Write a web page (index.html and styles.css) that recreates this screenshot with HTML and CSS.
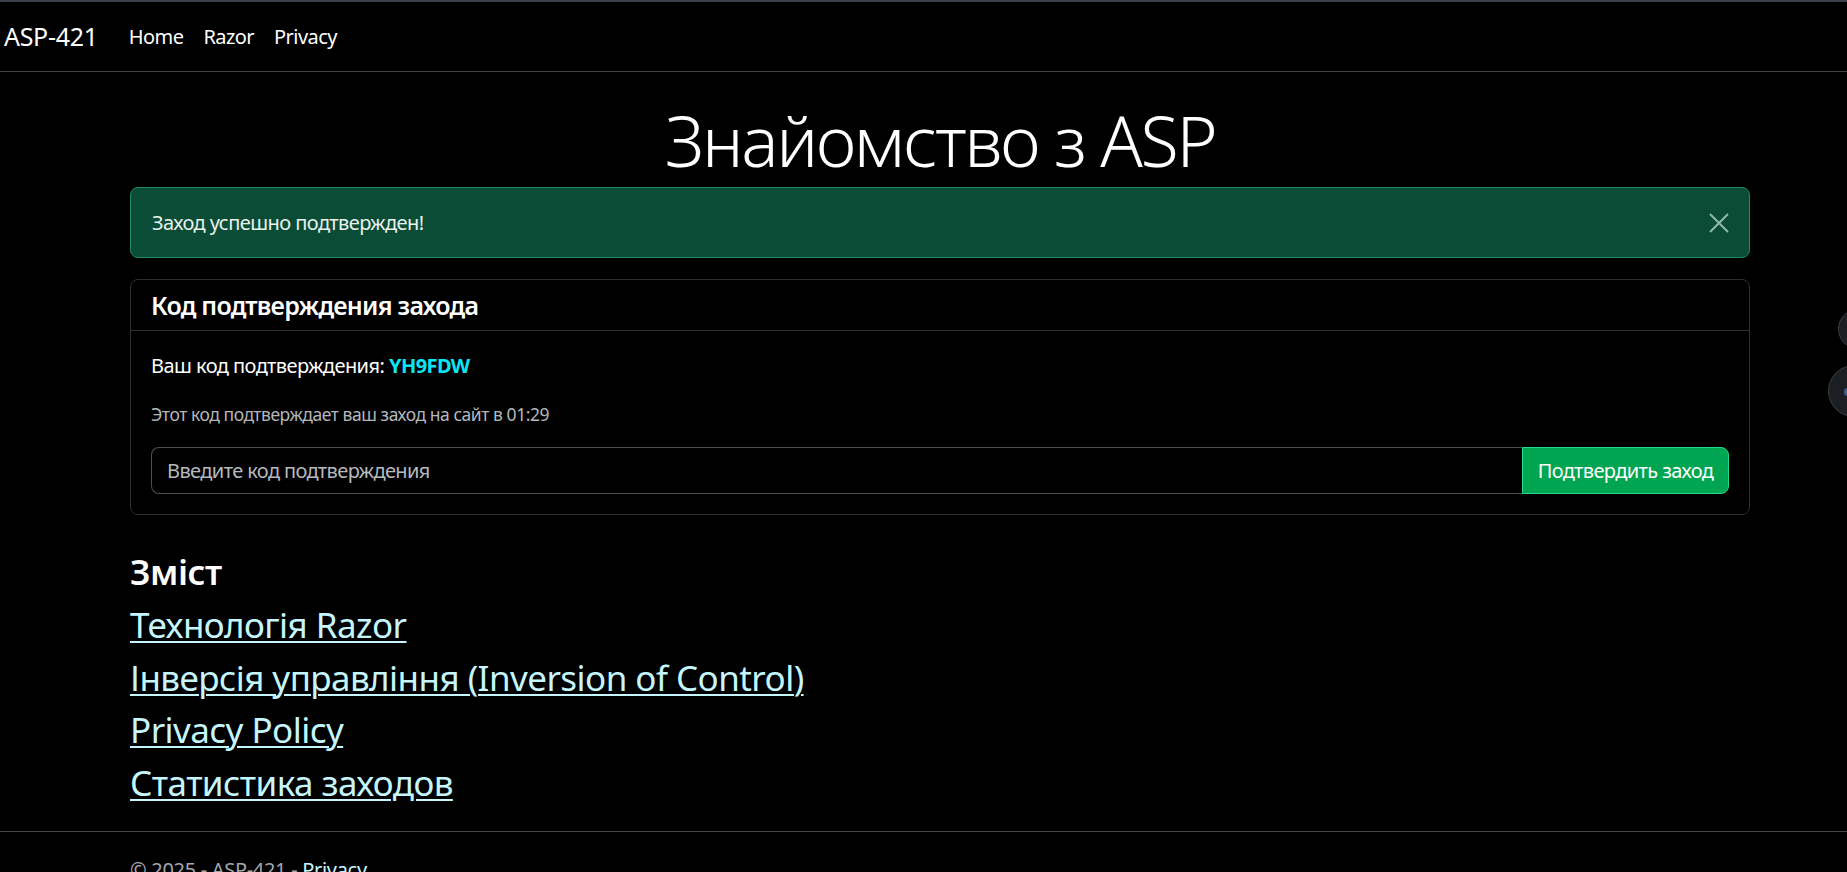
FILE: index.html
```html
<!DOCTYPE html>
<html lang="uk">
<head>
<meta charset="utf-8">
<title>ASP-421</title>
<link rel="stylesheet" href="styles.css">
</head>
<body>
<header class="topbar">
  <nav class="navbar">
    <a class="brand" href="#">ASP-421</a>
    <ul class="nav-links">
      <li><a href="#">Home</a></li>
      <li><a href="#">Razor</a></li>
      <li><a href="#">Privacy</a></li>
    </ul>
  </nav>
</header>

<main class="container">
  <h1 class="display-title">Знайомство з ASP</h1>

  <div class="alert">
    <span>Заход успешно подтвержден!</span>
    <button class="btn-close" aria-label="Close">
      <svg width="20" height="20" viewBox="0 0 20 20"><path d="M1 1 L19 19 M19 1 L1 19" stroke="#93b8a8" stroke-width="2" fill="none"/></svg>
    </button>
  </div>

  <section class="card">
    <div class="card-header">
      <h5 class="card-title">Код подтверждения захода</h5>
    </div>
    <div class="card-body">
      <p class="code-line">Ваш код подтверждения: <strong class="code">YH9FDW</strong></p>
      <p class="muted">Этот код подтверждает ваш заход на сайт в 01:29</p>
      <form class="input-group">
        <input class="form-control" type="text" placeholder="Введите код подтверждения">
        <button class="btn-confirm" type="button">Подтвердить заход</button>
      </form>
    </div>
  </section>

  <h3 class="toc-title">Зміст</h3>
  <h3 class="toc-item"><a href="#">Технологія Razor</a></h3>
  <h3 class="toc-item"><a href="#">Інверсія управління (Inversion of Control)</a></h3>
  <h3 class="toc-item"><a href="#">Privacy Policy</a></h3>
  <h3 class="toc-item"><a href="#">Статистика заходов</a></h3>
</main>

<footer class="footer">
  <div class="footer-inner">© 2025 - ASP-421 - <a href="#">Privacy</a></div>
</footer>

<div class="float-btn float-one"></div>
<div class="float-btn float-two"><span class="float-dot"></span></div>
</body>
</html>
```

FILE: styles.css
```css
* { box-sizing: border-box; }

html, body {
  margin: 0;
  padding: 0;
}

body {
  background: #000;
  color: #fff;
  font-family: "Noto Sans", "Open Sans", sans-serif;
  font-size: 20px;
  line-height: 1.5;
  letter-spacing: -0.55px;
}

a { color: inherit; }

.topbar {
  border-top: 2px solid #3b4148;
  border-bottom: 1px solid #3f454b;
}

.navbar {
  display: flex;
  align-items: center;
  height: 69px;
}

.brand {
  font-size: 25px;
  letter-spacing: -0.3px;
  text-decoration: none;
  color: #fff;
  padding-left: 4px;
  margin-right: 21px;
}

.nav-links {
  display: flex;
  list-style: none;
  margin: 0;
  padding: 0;
}

.nav-links a {
  display: block;
  padding: 0 10px;
  text-decoration: none;
  color: #fff;
}

.container {
  width: 1620px;
  margin-left: 130px;
}

.display-title {
  font-size: 70px;
  font-weight: 300;
  line-height: 84px;
  letter-spacing: -2.3px;
  text-align: center;
  margin: 26px 0 5px;
}

.alert {
  display: flex;
  align-items: center;
  justify-content: space-between;
  height: 71px;
  padding: 0 20px 0 21px;
  background: #0b4c37;
  border: 1px solid #1f8b5f;
  border-radius: 8px;
  color: #e8f1ec;
}

.btn-close {
  background: none;
  border: 0;
  padding: 0;
  width: 20px;
  height: 20px;
  display: flex;
}

.card {
  margin-top: 21px;
  border: 1px solid #2c2e30;
  border-radius: 8px;
}

.card-header {
  padding: 10px 20px;
  border-bottom: 1px solid #2c2e30;
}

.card-title {
  margin: 0;
  font-size: 25px;
  font-weight: 600;
  line-height: 30px;
  letter-spacing: -0.75px;
}

.card-body {
  padding: 20px;
}

.code-line {
  margin: 0 0 20px;
}

.code {
  color: #0ae6f5;
  font-weight: 700;
}

.muted {
  margin: 0 0 20px;
  font-size: 17.5px;
  line-height: 26px;
  letter-spacing: -0.45px;
  color: #b3b7bb;
}

.input-group {
  display: flex;
  height: 47px;
}

.form-control {
  flex: 1;
  background: #000;
  border: 1px solid #4a5056;
  border-right: 0;
  border-radius: 8px 0 0 8px;
  color: #fff;
  font: inherit;
  letter-spacing: -0.6px;
  padding: 0 15px;
}

.form-control::placeholder {
  color: #b6babe;
}

.btn-confirm {
  width: 207px;
  background: #00a551;
  border: 1px solid #25d98d;
  border-radius: 0 8px 8px 0;
  color: #fff;
  font: inherit;
  letter-spacing: -0.6px;
  padding: 0;
}

.toc-title {
  margin: 36px 0 11px;
  font-size: 35px;
  font-weight: 600;
  line-height: 42px;
  letter-spacing: -0.5px;
}

.toc-item {
  margin: 0 0 10.5px;
  font-size: 35px;
  font-weight: 400;
  line-height: 42px;
  letter-spacing: -0.55px;
}

.toc-item a {
  color: #c6f6fd;
  text-decoration: underline;
  text-decoration-thickness: 2px;
  text-underline-offset: 3px;
}

.footer {
  margin-top: 27px;
  border-top: 1px solid #45494e;
  line-height: 75px;
  white-space: nowrap;
}

.footer-inner {
  margin-left: 130px;
  color: #a3a8ad;
  letter-spacing: -0.3px;
}

.footer-inner a {
  color: #c6f6fd;
  text-decoration: none;
}

.float-btn {
  position: absolute;
  border-radius: 50%;
  background: #1b1f23;
  border: 1px solid #3a3f45;
}

.float-one {
  left: 1838px;
  top: 309px;
  width: 40px;
  height: 40px;
}

.float-two {
  left: 1828px;
  top: 365px;
  width: 52px;
  height: 52px;
}

.float-dot {
  position: absolute;
  left: 15px;
  top: 22px;
  width: 6px;
  height: 8px;
  border-radius: 3px;
  background: #3d5a8a;
}
```
